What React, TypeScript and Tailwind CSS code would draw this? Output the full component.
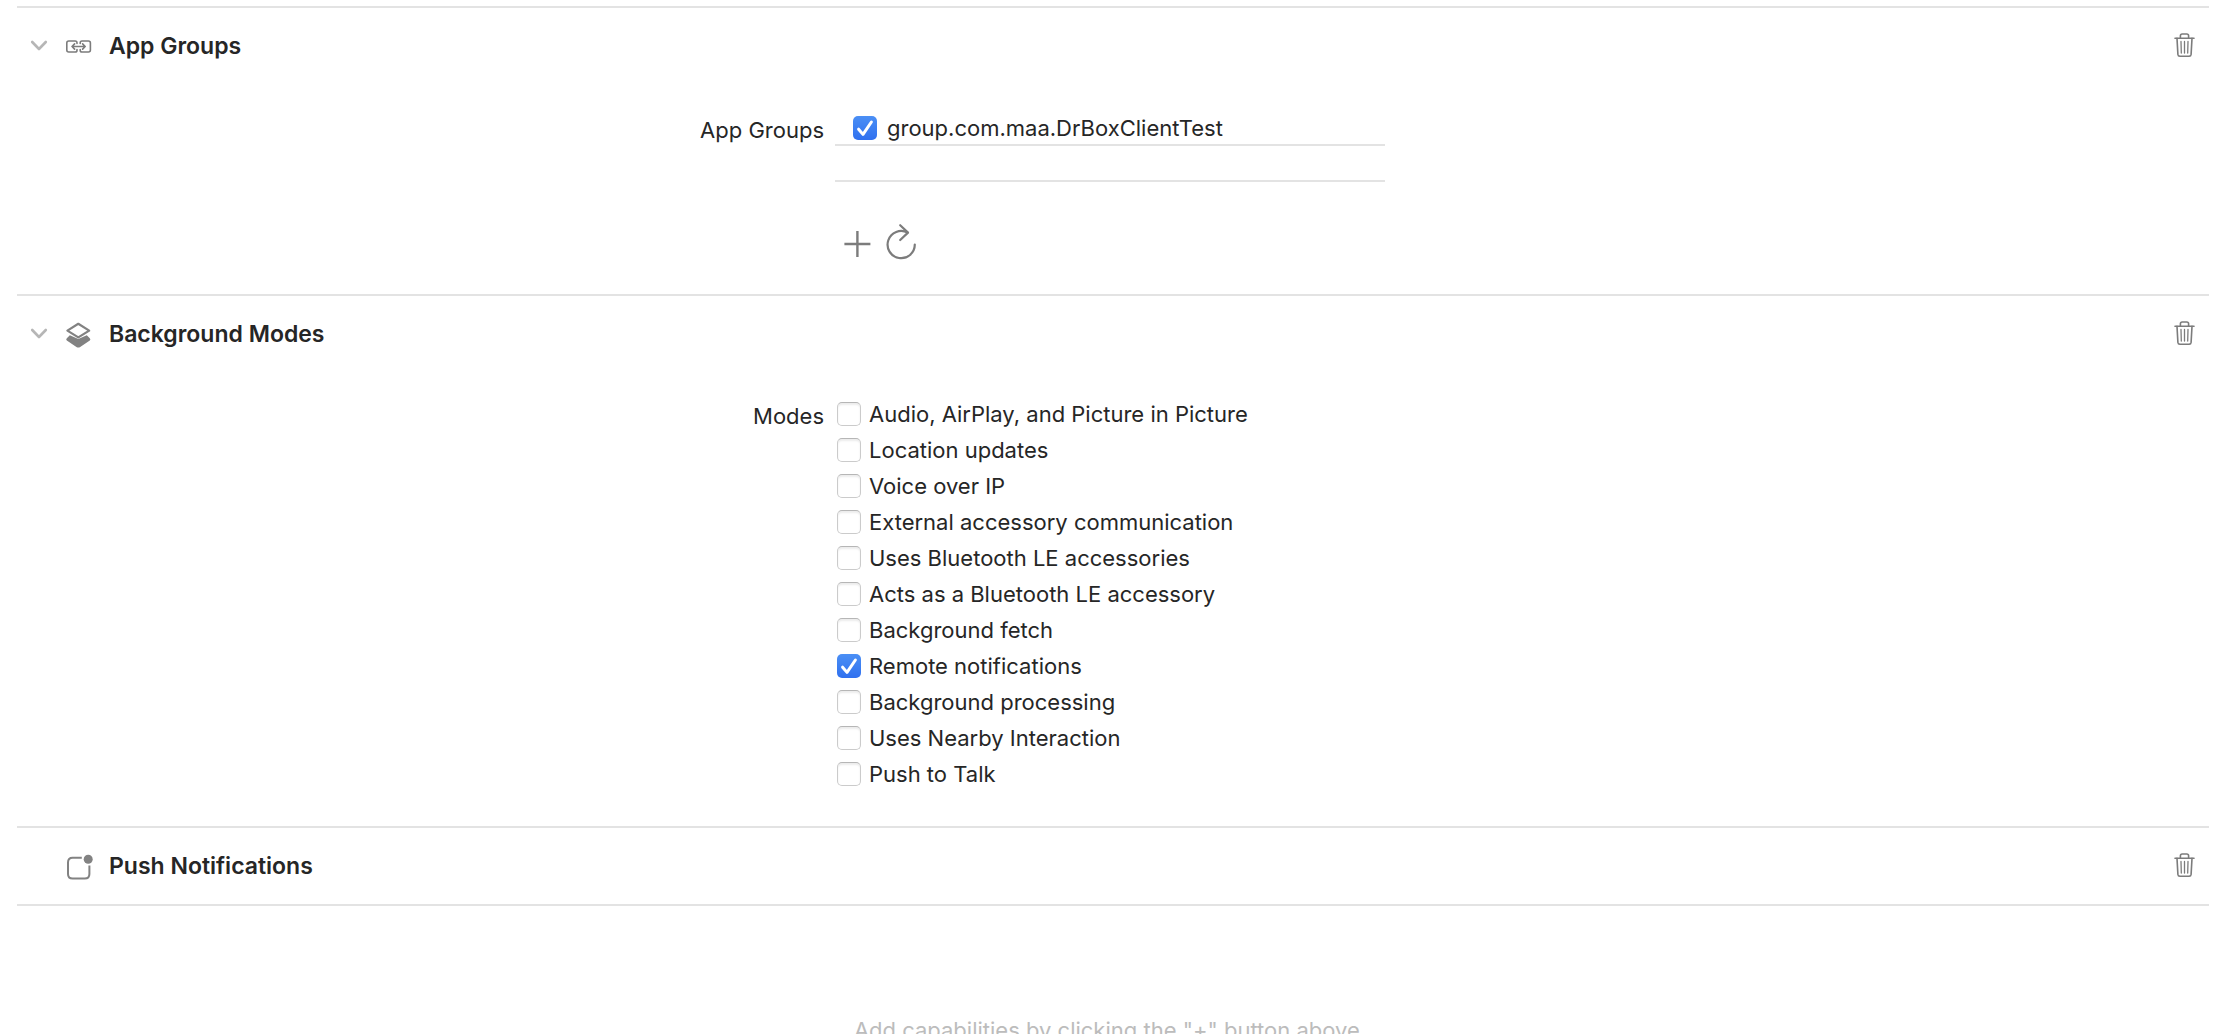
import { useState, type ReactNode } from "react";

const MODES = [
  "Audio, AirPlay, and Picture in Picture",
  "Location updates",
  "Voice over IP",
  "External accessory communication",
  "Uses Bluetooth LE accessories",
  "Acts as a Bluetooth LE accessory",
  "Background fetch",
  "Remote notifications",
  "Background processing",
  "Uses Nearby Interaction",
  "Push to Talk",
];

function ChevronIcon() {
  return (
    <svg viewBox="0 0 20 20" className="size-5" fill="none" stroke="#b6b6b6" strokeWidth="2.6" strokeLinecap="round" strokeLinejoin="round" aria-hidden="true">
      <path d="M3.2 6 L10 13 L16.8 6" />
    </svg>
  );
}

function GroupsIcon() {
  return (
    <svg viewBox="0 0 28 28" className="size-7" fill="none" stroke="#7c7c7c" strokeWidth="1.6" strokeLinecap="round" strokeLinejoin="round" aria-hidden="true">
      <path d="M12 11.4V10.8Q12 9 10.2 9H3.8Q1.8 9 1.8 11V18Q1.8 20 3.8 20H10.2Q12 20 12 18.2V17.6" />
      <path d="M15.2 11.4V10.8Q15.2 9 17 9H23.4Q25.4 9 25.4 11V18Q25.4 20 23.4 20H17Q15.2 20 15.2 18.2V17.6" />
      <path d="M7 14.5H20.2M9.6 11.9L7 14.5L9.6 17.1M17.6 11.9L20.2 14.5L17.6 17.1" />
    </svg>
  );
}

function LayersIcon() {
  return (
    <svg viewBox="0 0 28 28" className="size-7" aria-hidden="true">
      <path d="M4.8 15.2L13.3 19L21.8 15.2L24.8 18.2Q26 19.6 24.8 20.6L14.8 27.2Q13.3 28 11.8 27.2L1.8 20.6Q0.6 19.6 1.8 18.2Z" fill="#828282" />
      <path d="M13.3 3.8L24.2 10.6L13.3 17.4L2.4 10.6Z" fill="#fff" stroke="#828282" strokeWidth="2.2" strokeLinejoin="round" />
    </svg>
  );
}

function PushIcon() {
  return (
    <svg viewBox="0 0 28 28" className="size-7" aria-hidden="true">
      <path d="M16.8 5.8H7.6Q3 5.8 3 10.4V22Q3 26.6 7.6 26.6H19.8Q24.4 26.6 24.4 22V13.4" fill="none" stroke="#828282" strokeWidth="2" />
      <circle cx="23.2" cy="7.3" r="4.5" fill="#828282" />
    </svg>
  );
}

function TrashIcon() {
  return (
    <svg viewBox="0 0 24 28" className="h-7 w-6" fill="none" stroke="#7c7c7c" strokeWidth="1.6" strokeLinecap="round" strokeLinejoin="round" aria-hidden="true">
      <path d="M2 6.2H21" />
      <path d="M7.4 6V3.8Q7.4 2 9.2 2H13.8Q15.6 2 15.6 3.8V6" />
      <path d="M4 6.4L4.9 22.4Q5.1 24.2 6.8 24.2H16.2Q17.9 24.2 18.1 22.4L19 6.4" />
      <path d="M8 9.4L8.3 21M11.5 9.4V21M15 9.4L14.7 21" strokeWidth="1.3" />
    </svg>
  );
}

function PlusIcon() {
  return (
    <svg viewBox="0 0 36 36" className="size-9" fill="none" stroke="#7c7c7c" strokeWidth="2.4" aria-hidden="true">
      <path d="M18.4 5V31M5.4 18H31.4" />
    </svg>
  );
}

function RefreshIcon() {
  return (
    <svg viewBox="0 0 36 36" className="size-9 overflow-visible" fill="none" stroke="#7c7c7c" strokeWidth="2.2" strokeLinecap="round" strokeLinejoin="round" aria-hidden="true">
      <path d="M31.8 18.6A13.6 13.6 0 1 1 24.6 6.6" />
      <path d="M17.2 -0.8L25 6.6L17.2 14" />
    </svg>
  );
}

function CheckItem({ label, initial = false, gap }: { label: string; initial?: boolean; gap: string }) {
  const [checked, setChecked] = useState(initial);
  return (
    <label className={`flex h-9 items-center ${gap}`}>
      <span className="grid size-6 shrink-0">
        <input
          type="checkbox"
          checked={checked}
          onChange={(e) => setChecked(e.target.checked)}
          className="col-start-1 row-start-1 size-6 appearance-none rounded-[5px] border border-[#cbcbcb] border-t-[#b6b6b6] bg-white shadow-[inset_0_2px_2px_rgba(0,0,0,0.08)] checked:border-0 checked:bg-linear-to-b checked:from-[#4b8ff5] checked:to-[#3070ef] checked:shadow-none"
        />
        {checked && (
          <svg viewBox="0 0 24 24" className="pointer-events-none col-start-1 row-start-1 size-6" fill="none" stroke="#fff" strokeWidth="3" strokeLinecap="round" strokeLinejoin="round" aria-hidden="true">
            <path d="M5.6 13.2L10 18.4L18.4 6" />
          </svg>
        )}
      </span>
      <span className="whitespace-nowrap">{label}</span>
    </label>
  );
}

function Section({ title, icon, collapsible = false, children }: { title: string; icon: ReactNode; collapsible?: boolean; children?: ReactNode }) {
  const [open, setOpen] = useState(true);
  return (
    <section className="border-t-2 border-[#e3e3e3]">
      <header className="flex h-19 items-center pr-3 pl-3">
        <div className="w-5 shrink-0">
          {collapsible && (
            <button type="button" aria-label={`Toggle ${title}`} aria-expanded={open} onClick={() => setOpen(!open)} className="block">
              <ChevronIcon />
            </button>
          )}
        </div>
        <span className="ml-4 shrink-0">{icon}</span>
        <h2 className="ml-4 flex-1 text-[23px] font-semibold">{title}</h2>
        <button type="button" aria-label={`Delete ${title}`} className="block">
          <TrashIcon />
        </button>
      </header>
      {open && children}
    </section>
  );
}

function Field({ label, children }: { label: string; children: ReactNode }) {
  return (
    <div role="group" aria-label={label} className="grid grid-cols-[1fr_550px_1fr] gap-x-[11px] pr-1.5">
      <div className="pt-1 text-right">{label}</div>
      <div>{children}</div>
    </div>
  );
}

export default function App() {
  return (
    <main className="h-screen overflow-hidden bg-white pt-1.5 pr-[23px] pl-[17px] font-[Inter,sans-serif] text-[22px] leading-8 text-[#262626]">
      <Section title="App Groups" icon={<GroupsIcon />} collapsible>
        <div className="pt-[26px] pb-8">
          <Field label="App Groups">
            <ul>
              <li className="h-9 border-b-2 border-[#e3e3e3] pl-[18px]">
                <CheckItem label="group.com.maa.DrBoxClientTest" initial gap="gap-2.5" />
              </li>
              <li className="h-9 border-b-2 border-[#e3e3e3]" />
            </ul>
            <div className="mt-11 flex gap-2 pl-1">
              <button type="button" aria-label="Add group">
                <PlusIcon />
              </button>
              <button type="button" aria-label="Refresh groups">
                <RefreshIcon />
              </button>
            </div>
          </Field>
        </div>
      </Section>
      <Section title="Background Modes" icon={<LayersIcon />} collapsible>
        <div className="pt-6 pb-[34px]">
          <Field label="Modes">
            <ul className="pl-0.5">
              {MODES.map((mode) => (
                <li key={mode}>
                  <CheckItem label={mode} initial={mode === "Remote notifications"} gap="gap-2" />
                </li>
              ))}
            </ul>
          </Field>
        </div>
      </Section>
      <Section title="Push Notifications" icon={<PushIcon />} />
      <p className="border-t-2 border-[#e3e3e3] pt-[108px] pr-1.5 text-center text-[#bcbcbc]">
        Add capabilities by clicking the "+" button above.
      </p>
    </main>
  );
}
